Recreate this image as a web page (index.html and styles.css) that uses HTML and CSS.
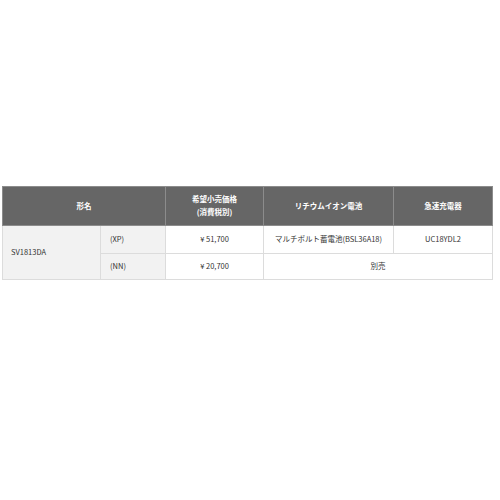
FILE: index.html
```html
<!DOCTYPE html>
<html lang="ja">
<head>
<meta charset="utf-8">
<link rel="stylesheet" href="styles.css">
</head>
<body>
<table class="spec">
  <colgroup>
    <col class="c1"><col class="c2"><col class="c3"><col class="c4"><col class="c5">
  </colgroup>
  <thead>
    <tr class="head">
      <th colspan="2">形名</th>
      <th>希望小売価格<br>(消費税別)</th>
      <th>リチウムイオン電池</th>
      <th>急速充電器</th>
    </tr>
  </thead>
  <tbody>
    <tr class="r1">
      <td rowspan="2" class="model">SV1813DA</td>
      <td class="var">(XP)</td>
      <td class="ctr">¥ 51,700</td>
      <td class="ctr">マルチボルト蓄電池(BSL36A18)</td>
      <td class="ctr">UC18YDL2</td>
    </tr>
    <tr class="r2">
      <td class="var">(NN)</td>
      <td class="ctr">¥ 20,700</td>
      <td class="ctr" colspan="2">別売</td>
    </tr>
  </tbody>
</table>
</body>
</html>
```
FILE: styles.css
```css
html, body {
  margin: 0;
  padding: 0;
  background: #fff;
}
body {
  padding: 186px 0 0 2px;
  font-family: "Noto Sans CJK JP", "Noto Sans", sans-serif;
  font-size: 7.5px;
  color: #333;
}
.spec {
  border-collapse: collapse;
  table-layout: fixed;
  width: 490px;
}
.c1 { width: 98px; }
.c2 { width: 65px; }
.c3 { width: 98px; }
.c4 { width: 130px; }
.c5 { width: 99px; }
.spec th, .spec td {
  border: 1px solid #dcdcdc;
  padding: 0;
  line-height: 12.7px;
  vertical-align: middle;
}
.spec th {
  background: #666;
  color: #fff;
  font-weight: bold;
  text-align: center;
  border-color: #8c8c8c;
}
.spec .head th { height: 38px; }
.spec .r1 td { height: 27px; }
.spec .r2 td { height: 25px; }
.spec .model {
  background: #f2f2f2;
  text-align: left;
  padding-left: 8px;
}
.spec .var {
  background: #f2f2f2;
  text-align: left;
  padding-left: 9px;
}
.spec .ctr { text-align: center; }
```
